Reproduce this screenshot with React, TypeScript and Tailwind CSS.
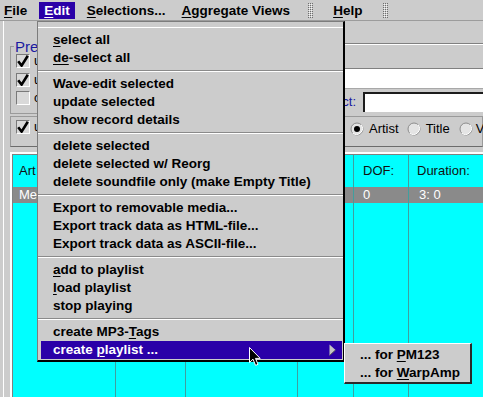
import React from "react";

type Item = { pre?: string; key?: string; post: string; active?: boolean; sub?: boolean };

const groups: Item[][] = [
  [
    { key: "s", post: "elect all" },
    { key: "de", post: "-select all" },
  ],
  [{ post: "Wave-edit selected" }, { post: "update selected" }, { post: "show record details" }],
  [
    { post: "delete selected" },
    { post: "delete selected w/ Reorg" },
    { post: "delete soundfile only (make Empty Title)" },
  ],
  [
    { post: "Export to removable media..." },
    { post: "Export track data as HTML-file..." },
    { post: "Export track data as ASCII-file..." },
  ],
  [{ key: "a", post: "dd to playlist" }, { key: "l", post: "oad playlist" }, { post: "stop playing" }],
  [
    { pre: "create MP3-", key: "T", post: "ags" },
    { pre: "create ", key: "p", post: "laylist ...", active: true, sub: true },
  ],
];

// columns behind the menu carry no visible text
const cols = [
  { w: "w-[103px]", head: "Art", val: "Me", hp: "pl-[6px]", vp: "pl-[6px]" },
  { w: "w-[70px]", head: "", val: "", hp: "pl-[6px]", vp: "pl-[6px]" },
  { w: "w-[112px]", head: "", val: "", hp: "pl-[6px]", vp: "pl-[6px]" },
  { w: "w-[56px]", head: "", val: "", hp: "pl-[6px]", vp: "pl-[6px]" },
  { w: "w-[55px]", head: "DOF:", val: "0", hp: "pl-[9px]", vp: "pl-[9px]" },
  { w: "w-[120px]", head: "Duration:", val: "3: 0", hp: "pl-[8px]", vp: "pl-[10px]" },
];

const Mn = ({ c }: { c: string }) => (
  <span className="underline underline-offset-[2px] decoration-1">{c}</span>
);

const Check = ({ on }: { on: boolean }) => (
  <span className="w-[14px] h-[14px] shrink-0 flex items-center justify-center border border-[#7a7a7a] border-b-white border-r-white bg-[#d9d9d9]">
    {on && (
      <svg width="12" height="12" viewBox="0 0 12 12">
        <path d="M1.2 6.2 L4.6 10.6 L10.8 0.8" stroke="#000" strokeWidth="2.6" fill="none" />
      </svg>
    )}
  </span>
);

const Radio = ({ on }: { on: boolean }) => (
  <svg width="14" height="14" viewBox="0 0 14 14" className="shrink-0">
    <circle cx="7" cy="7" r="6" fill="#e4e4e4" stroke="#8c8c8c" />
    <path d="M2.8 11.2 A6 6 0 0 0 11.2 2.8" stroke="#ffffff" fill="none" />
    {on && <circle cx="7" cy="7" r="3" fill="#000" />}
  </svg>
);

const Grip = ({ id }: { id: string }) => (
  <svg width="5" height="15" className="shrink-0">
    <defs>
      <pattern id={id} width="2" height="2" patternUnits="userSpaceOnUse">
        <rect width="1" height="1" fill="#6e6e6e" />
        <rect x="1" y="1" width="1" height="1" fill="#f4f4f4" />
      </pattern>
    </defs>
    <rect width="5" height="15" fill={`url(#${id})`} />
  </svg>
);

const App: React.FC = () => {
  return (
    <div className="w-[483px] h-[397px] bg-[#cccccc] relative overflow-hidden flex flex-col font-['Liberation_Sans',Arial,sans-serif] text-black">
      {/* menu bar */}
      <div className="h-[21px] shrink-0 flex items-center border-b border-[#9c9c9c] font-bold text-[13.5px] leading-[17px]">
        <span className="ml-[4px]"><Mn c="F" />ile</span>
        <span className="ml-[12px] px-[5px] h-[17px] bg-[#2a00a8] text-white"><Mn c="E" />dit</span>
        <span className="ml-[12px]"><Mn c="S" />elections...</span>
        <span className="ml-[16px]"><Mn c="A" />ggregate Views</span>
        <span className="ml-[18px] flex"><Grip id="g1" /></span>
        <span className="ml-[20px]"><Mn c="H" />elp</span>
        <span className="ml-[21px] flex"><Grip id="g2" /></span>
      </div>

      {/* window body */}
      <div className="flex-1 flex flex-col ml-[3px] border-l border-white pl-[6px]">
        <div className="h-[95px] flex shrink-0">
          {/* group box */}
          <div className="w-[190px] mt-[25px] h-[68px] border border-[#9a9a9a] flex flex-col pl-[5px]">
            <div className="-mt-[8px] -ml-[2px] w-fit px-[1px] bg-[#cccccc] text-[15px] leading-[15px] text-[#1a1aa0]">Pre</div>
            <div className="flex flex-col gap-[4.5px] text-[13px] leading-[14px]">
              <div className="flex items-center gap-[4px]"><Check on /><span>u</span></div>
              <div className="flex items-center gap-[4px]"><Check on /><span>u</span></div>
              <div className="flex items-center gap-[4px]"><Check on={false} /><span>c</span></div>
            </div>
          </div>
          {/* entry fields */}
          <div className="flex-1 ml-[10px] flex flex-col text-[13px]">
            <div className="h-[23px] border-b border-[#808080]" />
            <div className="h-[24px] border-t border-white" />
            <div className="h-[21px] bg-white border-t border-[#808080] border-b border-b-[#a8a8a8]" />
            <div className="mt-[3px] h-[20px] flex items-center">
              <span className="w-[146px] text-right text-[#1a1aa0] leading-[14px]">ct:</span>
              <div className="ml-[7px] flex-1 h-[20px] bg-white border-t-2 border-l-2 border-[#1c1c1c]" />
            </div>
          </div>
        </div>

        {/* sort row */}
        <div className="h-[31px] shrink-0 border border-[#9a9a9a] border-b-[#6c6c6c] flex items-start pl-[5px] pt-[3px] text-[13px] leading-[14px]">
          <div className="w-[334px] shrink-0 flex items-center gap-[4px]"><Check on /><span>u</span></div>
          <div className="mt-[2px] flex items-center whitespace-nowrap">
            <Radio on />
            <span className="ml-[5px]">Artist</span>
            <span className="ml-[8px]"><Radio on={false} /></span>
            <span className="ml-[5px]">Title</span>
            <span className="ml-[9px]"><Radio on={false} /></span>
            <span className="ml-[3px]">V</span>
          </div>
        </div>

        {/* track table */}
        <div className="mt-[5px] flex-1 flex flex-col border-t-2 border-l-2 border-white">
          <div className="flex-1 flex border-t border-l border-[#808080] bg-[#00ffff] overflow-hidden text-[13px]">
            {cols.map((c, i) => (
              <div key={i} className={`${c.w} shrink-0 flex flex-col border-r border-[#3f9f9f]`}>
                <div className={`h-[32px] flex items-center ${c.hp} text-[#111]`}>{c.head}</div>
                <div className={`h-[16px] flex items-center ${c.vp} bg-[#8a8a8a] text-white`}>{c.val}</div>
              </div>
            ))}
          </div>
        </div>
      </div>

      {/* Edit pull-down */}
      <div className="absolute left-[37px] top-[21px] w-[308px] h-[341px] bg-[#cccccc] border-l border-t border-[#7c7c7c] border-r-2 border-b-2 border-r-black border-b-black flex flex-col font-bold text-[13.5px] leading-[18px]">
        <div className="mt-[5px] border-t border-white" />
        <div className="pt-[3px] flex flex-col">
          {groups.map((g, gi) => (
            <React.Fragment key={gi}>
              {gi > 0 && (
                <div className="h-[8px] pt-[3px]">
                  <div className="border-t border-[#8a8a8a]" />
                  <div className="border-t border-white" />
                </div>
              )}
              {g.map((it, ii) => (
                <div
                  key={ii}
                  className={`ml-[3px] mr-[1px] h-[18px] pl-[12px] flex items-center whitespace-nowrap ${it.active ? "bg-[#2a00a8] text-white" : ""}`}
                >
                  <span>
                    {it.pre}
                    {it.key && <Mn c={it.key} />}
                    {it.post}
                  </span>
                  {it.sub && (
                    <svg width="7" height="12" viewBox="0 0 7 12" className="ml-auto mr-[6px]">
                      <polygon points="0.5,0.5 6.5,6 0.5,11.5" fill="#c4c4c4" />
                      <line x1="0.5" y1="11.5" x2="6.5" y2="6" stroke="#5a5a5a" />
                    </svg>
                  )}
                </div>
              ))}
            </React.Fragment>
          ))}
        </div>
      </div>

      {/* cascade submenu */}
      <div className="absolute left-[344px] top-[343px] w-[128px] h-[41px] bg-[#cccccc] border-l border-t border-white border-r-2 border-b-2 border-r-[#2a2a2a] border-b-[#2a2a2a] pt-[2px] font-bold text-[13.5px] leading-[18px]">
        <div className="pl-[15px]">... for <Mn c="P" />M123</div>
        <div className="pl-[15px]">... for <Mn c="W" />arpAmp</div>
      </div>

      {/* mouse pointer */}
      <svg width="13" height="20" viewBox="0 0 13 20" className="absolute left-[249px] top-[347px]">
        <path d="M0.5 0.5 L0.5 15.5 L4 12.2 L6.6 18.4 L9 17.3 L6.5 11.4 L11.2 11.4 Z" fill="#000" stroke="#fff" strokeWidth="1" />
      </svg>
    </div>
  );
};

export default App;
